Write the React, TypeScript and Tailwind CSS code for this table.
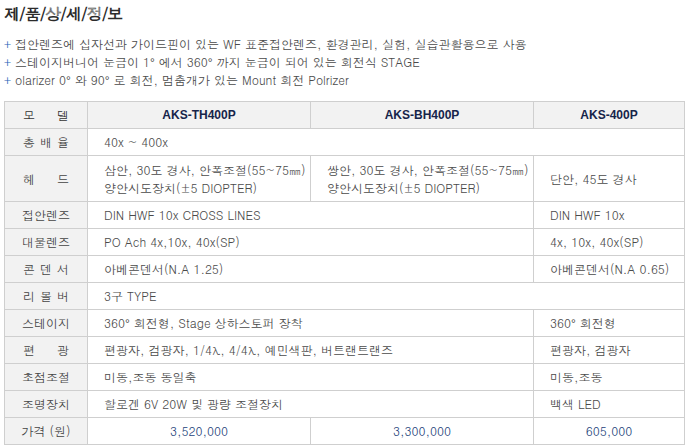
const font = "font-['Dotum','Noto_Sans_CJK_KR','Liberation_Sans',sans-serif]";

type Cell = { text: React.ReactNode; span?: number; price?: boolean };
type Row = { label: string; spaced?: boolean; tall?: boolean; cells: Cell[] };

// degree sign in a latin font so it sits tight against the number
const Deg = () => <span className="font-['Liberation_Sans',sans-serif] leading-none">°</span>;

const rows: Row[] = [
  { label: "총배율", spaced: true, cells: [{ text: "40x ~ 400x", span: 3 }] },
  {
    label: "헤드",
    spaced: true,
    tall: true,
    cells: [
      { text: <>삼안, 30도 경사, 안폭조절(55~75㎜)<br />양안시도장치(±5 DIOPTER)</> },
      { text: <>쌍안, 30도 경사, 안폭조절(55~75㎜)<br />양안시도장치(±5 DIOPTER)</> },
      { text: "단안, 45도 경사" },
    ],
  },
  { label: "접안렌즈", cells: [{ text: "DIN HWF 10x CROSS LINES", span: 2 }, { text: "DIN HWF 10x" }] },
  { label: "대물렌즈", cells: [{ text: "PO Ach 4x,10x, 40x(SP)", span: 2 }, { text: "4x, 10x, 40x(SP)" }] },
  { label: "콘덴서", spaced: true, cells: [{ text: "아베콘덴서(N.A 1.25)", span: 2 }, { text: "아베콘덴서(N.A 0.65)" }] },
  { label: "리볼버", spaced: true, cells: [{ text: "3구 TYPE", span: 3 }] },
  {
    label: "스테이지",
    cells: [
      { text: <>360<Deg /> 회전형, Stage 상하스토퍼 장착</>, span: 2 },
      { text: <>360<Deg /> 회전형</> },
    ],
  },
  {
    label: "편광",
    spaced: true,
    cells: [{ text: "편광자, 검광자, 1/4λ, 4/4λ, 예민색판, 버트랜트랜즈", span: 2 }, { text: "편광자, 검광자" }],
  },
  { label: "초점조절", cells: [{ text: "미동,조동 동일축", span: 2 }, { text: "미동,조동" }] },
  { label: "조명장치", cells: [{ text: "할로겐 6V 20W 및 광량 조절장치", span: 2 }, { text: "백색 LED" }] },
  {
    label: "가격 (원)",
    cells: [
      { text: "3,520,000", price: true },
      { text: "3,300,000", price: true },
      { text: "605,000", price: true },
    ],
  },
];

function Label({ text, spaced }: { text: string; spaced?: boolean }) {
  if (!spaced) return <span>{text}</span>;
  return (
    <span className="mx-auto flex w-[46px] justify-between">
      {text.split("").map((ch, i) => (
        <span key={i}>{ch}</span>
      ))}
    </span>
  );
}

export default function App() {
  return (
    <div className={`w-[687px] h-[448px] bg-white overflow-hidden text-[12px] text-[#4a4a4a] ${font}`}>
      <h1 className="h-[25px] pl-[4px] pt-[3px] text-[16px] leading-[22px] font-bold tracking-[-1px] text-[#2b2b2b]">
        제/품/상/세/정/보
      </h1>

      <ul className="mt-[10px] pl-[4px] leading-[18px]">
        <li className="h-[18px]">
          <span className="text-[#2a63b8]">+</span> 접안렌즈에 십자선과 가이드핀이 있는 WF 표준접안렌즈, 환경관리, 실험, 실습관활용으로 사용
        </li>
        <li className="h-[18px]">
          <span className="text-[#2a63b8]">+</span> 스테이지버니어 눈금이 1<Deg /> 에서 360<Deg /> 까지 눈금이 되어 있는 회전식 STAGE
        </li>
        <li className="h-[18px]">
          <span className="text-[#2a63b8]">+</span> olarizer 0<Deg /> 와 90<Deg /> 로 회전, 멈춤개가 있는 Mount 회전 Polrizer
        </li>
      </ul>

      <table className="ml-[4px] mt-[12px] w-[680px] border-collapse border border-[#cfcfcf] table-fixed">
        <colgroup>
          <col className="w-[83px]" />
          <col className="w-[223px]" />
          <col className="w-[223px]" />
          <col className="w-[151px]" />
        </colgroup>
        <thead>
          <tr className="h-[27px] bg-[#f2f2f2]">
            <th className="border border-[#cfcfcf] text-center font-normal text-[#333]">
              <Label text="모델" spaced />
            </th>
            {["AKS-TH400P", "AKS-BH400P", "AKS-400P"].map((m) => (
              <th
                key={m}
                className="border border-[#cfcfcf] text-center font-['Liberation_Sans',sans-serif] font-bold text-[#16244a]"
              >
                {m}
              </th>
            ))}
          </tr>
        </thead>
        <tbody>
          {rows.map((r) => (
            <tr key={r.label} className={r.tall ? "h-[46px]" : "h-[27px]"}>
              <td className="border border-[#cfcfcf] bg-[#f2f2f2] text-center text-[#444]">
                <Label text={r.label} spaced={r.spaced} />
              </td>
              {r.cells.map((c, i) => (
                <td
                  key={i}
                  colSpan={c.span}
                  className={
                    c.price
                      ? "border border-[#cfcfcf] text-center text-[#1d3f7a]"
                      : "border border-[#cfcfcf] pl-[16px] leading-[18px]"
                  }
                >
                  {c.text}
                </td>
              ))}
            </tr>
          ))}
        </tbody>
      </table>
    </div>
  );
}
